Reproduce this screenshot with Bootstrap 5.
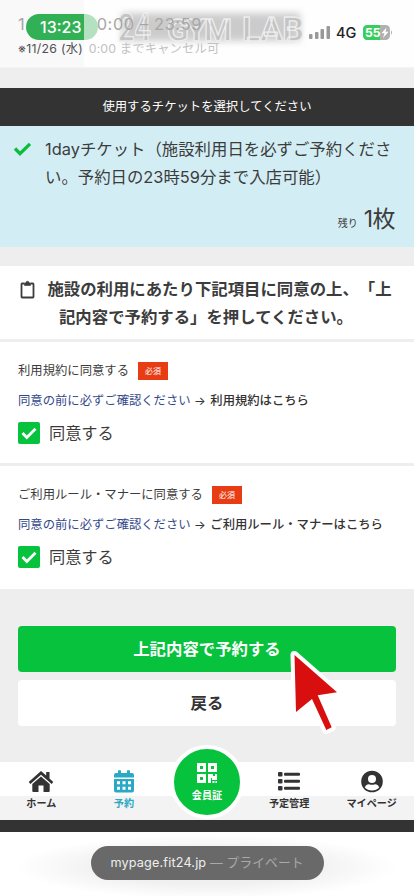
<!DOCTYPE html>
<html lang="ja">
<head>
<meta charset="utf-8">
<meta name="viewport" content="width=device-width, initial-scale=1">
<title>予約</title>
<link href="https://cdn.jsdelivr.net/npm/bootstrap@5.3.0/dist/css/bootstrap.min.css" rel="stylesheet">
<style>
body{font-family:"Inter","Noto Sans CJK JP",sans-serif;font-size:16.4px;color:#3c3c3c;background:#eee;overflow:hidden;text-spacing-trim:space-all}
.screen{height:896px;width:414px}
.screen svg{display:block;flex-shrink:0}
.topbar{height:68px;background:linear-gradient(90deg,#f9f9f9 84px,#fefefe 84px);border-bottom:1px solid #f4f4f4}
.slot{padding:14px 0 0 18px;line-height:21px;color:#a6a6a6;white-space:pre}
.slot span{margin-left:72px;letter-spacing:.6px}
.cancel{padding-left:18px;line-height:28px;font-size:12.3px;color:#c2c2c2;white-space:pre;letter-spacing:.15px}
.cancel b{font-weight:400;color:#505050;margin-right:2px;letter-spacing:.3px}
.clock{left:26px;top:14px;width:72px;height:26px;border-radius:13px;color:#fff;font-size:16px;font-weight:500;line-height:26px;padding-left:14px;background:linear-gradient(90deg,#32b055 58px,#b4e2c0 58px)}
.gymlogo{left:108px;top:4px}
.signal{left:308px;top:20px;width:86px}
.net{font-size:14.5px;line-height:26px;color:#222;font-weight:500}
.banner{margin-top:20px;height:38px;background:#333;color:#fff;font-size:12.35px}
.ticket{height:121px;background:#d3edf4;padding:9px 18px 0 13px;line-height:28px}
.ticket p{margin-left:13px}
.remain{font-size:10px;line-height:28px;margin:14px 1px 0 0}
.remain span{font-size:23px;letter-spacing:-.5px;margin-left:1px}
.lead-box{margin-top:19px;height:76px;background:#fff;border-bottom:3px solid #eee;font-weight:700;line-height:27.6px;padding:10px 2px 0 0}
.agree{height:124px;background:#fff;border-bottom:3px solid #eee;padding:19px 18px 0}
.agree.last{height:123px;border:0}
.lab{font-size:12.33px;line-height:20px;height:20px}
.req{width:30px;height:18px;background:#e83c14;color:#fff;font-size:8px;line-height:18px;margin:-1px 0 0 9px}
.note{font-size:12.33px;line-height:20px;margin-top:10px;color:#34488a}
.note a{color:#333;font-weight:500;text-decoration:none;margin-left:1px}
.note i{font-style:normal;color:#333}
.agree .tick{width:22px;height:22px;border-radius:2px;background:#06c23c}
.tickrow{margin-top:10px;height:23px;line-height:23px}
.tickrow span{margin:1px 0 0 9px;font-size:16.2px}
.acts{padding:37px 18px 0}
.acts .btn{height:46px;border:0;border-radius:4px;font-size:16.4px;font-weight:700;padding:0;color:#333;background:#fff}
.acts .go{background:#06c23c;color:#fff;margin-bottom:8px}
.tabs{margin-top:36px;height:58px;background:linear-gradient(#fff 34px,#f3f3f3 34px)}
.tabs>a{width:82.6px;font-size:10.1px;font-weight:700;line-height:14px;color:#333;text-decoration:none;padding-top:8px}
.tabs svg{margin-bottom:3px}
.tabs>a.on{color:#29a9c5}
.tabs>a.member{color:#fff;padding:0}
.disc{width:74px;height:74px;margin-top:-17px;margin-left:1px;border:4px solid #fff;border-radius:50%;background:#06c23c;padding-top:14px}
.disc svg{margin-bottom:5px}
.base{height:12px;background:#333}
.foot{height:64px;background:radial-gradient(ellipse at 50% 35px,#f0f0f0 35%,#fff 65%);padding-top:14px}
.addr{width:233px;height:34px;border-radius:17px;background:#696969;color:#eee;font-size:12.7px;line-height:34px;letter-spacing:.15px;white-space:pre}
.addr span{color:#aaa}
.pointer{left:284px;top:640px}
</style>
</head>
<body>
<main class="screen position-relative d-flex flex-column">
<header class="topbar position-relative">
<svg class="gymlogo position-absolute" width="206" height="50">
<defs><filter id="haze" x="-10%" y="-40%" width="120%" height="180%"><feGaussianBlur stdDeviation="3.500"/></filter></defs>
<rect x="14" y="9" width="178" height="28" fill="#aaa" opacity=".6" filter="url(#haze)"/>
<g font-family="Roboto,sans-serif" font-weight="700" font-size="38" fill="#c4c4c4" stroke="#ededed" stroke-width="1.300" stroke-linejoin="round">
<text x="10" y="37" textLength="33" lengthAdjust="spacingAndGlyphs">24</text>
<text x="59" y="37" textLength="65" lengthAdjust="spacing" font-size="32">GYM</text>
<text x="134" y="37" textLength="62" lengthAdjust="spacing" font-size="34">LAB</text></g>
</svg>
<div class="position-relative"><div class="slot">1<span>0:00 – 23:59</span></div>
<div class="cancel"><b>※11/26 (水)</b> 0:00 までキャンセル可</div></div>
<div class="clock position-absolute">13:23</div>
<div class="signal position-absolute d-flex align-items-center">
<svg width="23" height="26" fill="#999"><rect x="1" y="14" width="3.5" height="5" rx="1"/><rect x="7" y="12" width="3.5" height="7" rx="1"/><rect x="12.500" y="9" width="3.500" height="10" rx="1"/><rect x="18.500" y="6" width="3.500" height="13" rx="1"/></svg>
<span class="net" style="margin-left:5px">4G</span>
<svg style="margin-left:6px" width="34" height="26"><rect x="1" y="5" width="27" height="15" rx="4.500" fill="#b0b0b0"/><path d="M5.500 5H18v15H5.500A4.500 4.500 0 0 1 1 15.500v-6A4.500 4.500 0 0 1 5.500 5z" fill="#38ce5d"/><path d="M29 10q2 2.500 0 5z" fill="#b0b0b0"/><text x="3" y="17" font-family="Inter,sans-serif" font-size="12" font-weight="700" textLength="15.500" lengthAdjust="spacingAndGlyphs" fill="#fff">55</text><path d="M24.500 7.500l-5 5.700h3L21 18l5.500-6.300h-3z" fill="#fff"/></svg>
</div>
</header>
<div class="banner d-flex align-items-center justify-content-center">使用するチケットを選択してください</div>
<section class="ticket">
<div class="d-flex"><svg width="19" height="28" fill="none" stroke="#0bbd3c" stroke-width="3.300"><path d="M2 13.500l5 5.200L17 8.800"/></svg>
<p class="mb-0 text-nowrap">1dayチケット（施設利用日を必ずご予約くださ<br>い。予約日の23時59分まで入店可能）</p></div>
<div class="remain text-end">残り&ensp;<span>1枚</span></div>
</section>
<section class="lead-box text-center text-nowrap">
<div class="d-flex justify-content-center align-items-center"><svg width="15" height="19" fill="none" stroke="#3c3c3c" stroke-width="1.800"><path d="M4.500 3.500H2.200q-.7 0-.7.700v12.600q0 .7.700.7h10.600q.7 0 .7-.7V4.200q0-.7-.7-.7h-2.300"/><path d="M4.500 3h1.300a1.700 1.700 0 0 1 3.400 0h1.300v2.500h-6z" fill="#3c3c3c" stroke-width=".6"/></svg><span style="margin-left:12px">施設の利用にあたり下記項目に同意の上、「上</span></div>
<div>記内容で予約する」を押してください。</div>
</section>
<section class="agree">
<div class="lab d-flex align-items-center">利用規約に同意する<span class="req text-center">必須</span></div>
<div class="note text-nowrap">同意の前に必ずご確認ください <i>→</i> <a href="#">利用規約はこちら</a></div>
<div class="tickrow d-flex align-items-center"><svg class="tick" viewBox="0 0 22 22" fill="none" stroke="#fff" stroke-width="2.800"><path d="M4.500 11l4.300 4.400 8.700-8.600"/></svg><span>同意する</span></div>
</section>
<section class="agree last">
<div class="lab d-flex align-items-center">ご利用ルール・マナーに同意する<span class="req text-center">必須</span></div>
<div class="note text-nowrap">同意の前に必ずご確認ください <i>→</i> <a href="#">ご利用ルール・マナーはこちら</a></div>
<div class="tickrow d-flex align-items-center"><svg class="tick" viewBox="0 0 22 22" fill="none" stroke="#fff" stroke-width="2.800"><path d="M4.500 11l4.300 4.400 8.700-8.600"/></svg><span>同意する</span></div>
</section>
<div class="acts"><button class="btn go w-100 d-block">上記内容で予約する</button><button class="btn w-100 d-block">戻る</button></div>
<nav class="tabs d-flex">
<a href="#" class="d-flex flex-column align-items-center"><svg width="26" height="23" fill="#333"><path d="M13 1L.7 12l1.700 1.900L13 4.700l10.600 9.200 1.700-1.900-3.800-3.400V2h-3.300v3.600z"/><path d="M13 6.600l-8.700 7.500V21q0 1 1 1h5.200v-6.500h5V22h5.200q1 0 1-1v-6.900z"/></svg>ホーム</a>
<a href="#" class="on d-flex flex-column align-items-center"><svg width="20" height="23" viewBox="0 0 20 23" fill="#29a9c5"><path d="M4 1q0-.7.700-.7h1.600q.7 0 .7.700v2h6V1q0-.7.700-.7h1.600q.7 0 .7.700v2h2q2 0 2 2v2.500H0V5q0-2 2-2h2z"/><path fill-rule="evenodd" d="M0 9h20v11.500q0 2-2 2H2q-2 0-2-2zM3 11.300v3h3v-3zM8.500 11.300v3h3v-3zM14 11.300v3h3v-3zM3 16.800v3h3v-3zM8.500 16.800v3h3v-3zM14 16.800v3h3v-3z"/></svg>予約</a>
<a href="#" class="member d-flex flex-column align-items-center"><div class="disc d-flex flex-column align-items-center position-relative flex-shrink-0"><svg width="20" height="20" fill="#fff"><path fill-rule="evenodd" d="M0 0h9v9H0zM3 3v3h3V3zM11 0h9v9h-9zM14 3v3h3V3zM0 11h9v9H0zM3 14v3h3v-3z"/><path d="M11 11h5v2h2v-2h2v6h-5v-2h-1v5h-3zM15.500 18h2v2h-2zM18.500 18H20v2h-1.500z"/></svg>会員証</div></a>
<a href="#" class="d-flex flex-column align-items-center"><svg width="24" height="23" fill="#333"><rect x="1" y="2" width="4.500" height="4.500" rx="1"/><rect x="1" y="9" width="4.500" height="4.500" rx="1"/><rect x="1" y="16" width="4.500" height="4.500" rx="1"/><rect x="7" y="2.800" width="16" height="3" rx="1"/><rect x="7" y="9.800" width="16" height="3" rx="1"/><rect x="7" y="16.800" width="16" height="3" rx="1"/></svg>予定管理</a>
<a href="#" class="d-flex flex-column align-items-center"><svg width="22" height="23"><circle cx="11" cy="11.500" r="10.800" fill="#333"/><circle cx="11" cy="9" r="4" fill="#fff"/><path d="M3.800 17.500q1.200-3.200 4.200-3.200 3 1 6 0 3 0 4.200 3.200Q15.500 20.400 11 20.400T3.800 17.500z" fill="#fff"/></svg>マイページ</a>
</nav>
<div class="base"></div>
<footer class="foot"><div class="addr text-center mx-auto">mypage.fit24.jp <span>— プライベート</span></div></footer>
<svg class="pointer position-absolute" width="60" height="100"><path d="M10.500 15L53 52.300 33.700 55.300 47.700 87.300 42.300 90 28 59 12 72z" fill="#d90f0f" stroke="#fff" stroke-width="8" stroke-linejoin="round" paint-order="stroke"/></svg>
</main>
<script src="https://cdn.jsdelivr.net/npm/bootstrap@5.3.0/dist/js/bootstrap.bundle.min.js"></script>
</body>
</html>
